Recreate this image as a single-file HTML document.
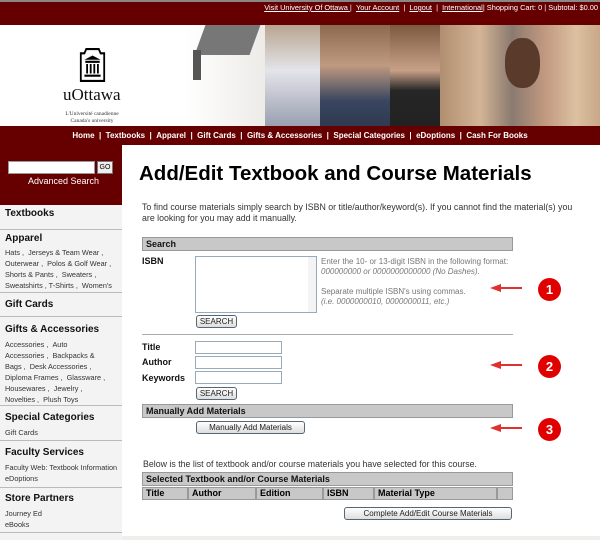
<!DOCTYPE html>
<html><head><meta charset="utf-8"><style>
*{margin:0;padding:0;box-sizing:border-box}
body{width:600px;height:540px;overflow:hidden;background:#fff;font-family:"Liberation Sans",Arial,sans-serif;position:relative}
.a{position:absolute}
.top{left:0;top:0;width:600px;height:26px;background:#660000;border-top:2px solid #888}
.toplinks{right:2px;top:3px;color:#fff;font-size:7.4px;white-space:nowrap}
.toplinks u{color:#fff}
.nav{left:0;top:126px;width:600px;height:19px;background:#660000;color:#fff;font-size:8px;font-weight:bold;text-align:center;line-height:19px;white-space:nowrap}
.side{left:0;top:145px;width:122px;height:395px;background:#f3f3f3}
.sbox{left:0;top:145px;width:122px;height:60px;background:#660000}
.sh{font-size:10px;font-weight:bold;color:#111;left:5px}
.si{font-size:7.3px;color:#333;left:5px;line-height:11px;width:118px}
.sl{left:0;width:122px;height:1px;background:#bbb}
.bar{background:#c8c8c8;border:1px solid #999;font-size:9px;font-weight:bold;color:#111;padding-left:3px;line-height:12px}
.lbl{font-size:9px;font-weight:bold;color:#111}
.inp{border:1px solid #9ab;background:#fff}
.btn{border:1px solid #567;border-radius:3px;background:linear-gradient(#fff,#ddd);font-size:8px;text-align:center;color:#222;line-height:11px}
.hint{font-size:8px;color:#777;line-height:10px}
.circ{width:23px;height:23px;border-radius:50%;background:#e00000;color:#fff;font-weight:bold;font-size:13px;text-align:center;line-height:23px}
.th{background:#c8c8c8;border:1px solid #999;font-size:9px;font-weight:bold;padding-left:3px;line-height:11px;height:13px;top:487px}
</style></head><body>
<div class="a top"></div>
<div class="a toplinks"><u>Visit University Of Ottawa </u> | &nbsp;<u>Your Account</u> &nbsp;| &nbsp;<u>Logout</u> &nbsp;| &nbsp;<u>International</u>| Shopping Cart: 0 | Subtotal: $0.00</div>
<div class="a" style="left:0;top:25px;width:600px;height:101px;background:#fff"></div>
<div class="a" style="left:185px;top:25px;width:85px;height:101px;background:linear-gradient(90deg,#fff,#eceae6)"></div>
<div class="a" style="left:200px;top:25px;width:55px;height:30px;background:#777;transform:skewX(-20deg)"></div>
<div class="a" style="left:193px;top:50px;width:8px;height:30px;background:#555"></div>
<div class="a" style="left:265px;top:25px;width:55px;height:101px;background:linear-gradient(#b8a590,#e4e4ea 45%,#9aa0b0)"></div>
<div class="a" style="left:320px;top:25px;width:70px;height:101px;background:linear-gradient(#8a6a50,#c09a80 40%,#3a4660 75%,#2f3a50)"></div>
<div class="a" style="left:390px;top:25px;width:50px;height:101px;background:linear-gradient(#7a5a40,#c8a088 45%,#262626 65%,#222)"></div>
<div class="a" style="left:440px;top:25px;width:160px;height:101px;background:linear-gradient(90deg,#b08f70,#d4b496 25%,#8a7a70 45%,#c09880 65%,#dcc0a0 85%,#c8a888)"></div>
<div class="a" style="left:505px;top:38px;width:35px;height:50px;border-radius:45%;background:#5a3a2a"></div>
<svg class="a" style="left:79px;top:47px" width="27" height="35" viewBox="0 0 30 33" preserveAspectRatio="none"><path d="M2 32V6h4l2-4h14l2 4h4v26z" fill="#fff" stroke="#000" stroke-width="2"/><path d="M6 12h18l-9-4z M7 13h16v2H7z M8 16h2v9H8zM12 16h2v9h-2zM16 16h2v9h-2zM20 16h2v9h-2z M6 26h18v2H6z" fill="#000"/></svg>
<div class="a" style="left:63px;top:85px;font-family:'Liberation Serif',serif;font-size:17px;color:#111">uOttawa</div>
<div class="a" style="left:57px;top:111px;font-family:'Liberation Serif',serif;font-size:5.5px;color:#333;text-align:center;width:70px;line-height:7px">L'Université canadienne<br>Canada's university</div>
<div class="a nav">Home &nbsp;| &nbsp;Textbooks &nbsp;| &nbsp;Apparel &nbsp;| &nbsp;Gift Cards &nbsp;| &nbsp;Gifts &amp; Accessories &nbsp;| &nbsp;Special Categories &nbsp;| &nbsp;eDoptions &nbsp;| &nbsp;Cash For Books</div>
<div class="a side"></div>
<div class="a sbox"></div>
<div class="a" style="left:8px;top:161px;width:87px;height:13px;background:#fff;border:1px solid #999"></div>
<div class="a" style="left:97px;top:161px;width:16px;height:13px;background:#eee;border:1px solid #777;font-size:7px;text-align:center;line-height:11px">GO</div>
<div class="a" style="left:28px;top:176px;font-size:9px;color:#fff">Advanced Search</div>
<div class="a sh" style="top:208px">Textbooks</div>
<div class="a sl" style="top:229px"></div>
<div class="a sh" style="top:233px">Apparel</div>
<div class="a si" style="top:247px">Hats , &nbsp;Jerseys &amp; Team Wear ,<br>Outerwear , &nbsp;Polos &amp; Golf Wear ,<br>Shorts &amp; Pants , &nbsp;Sweaters ,<br>Sweatshirts , T-Shirts , &nbsp;Women's</div>
<div class="a sl" style="top:292px"></div>
<div class="a sh" style="top:299px">Gift Cards</div>
<div class="a sl" style="top:316px"></div>
<div class="a sh" style="top:324px">Gifts &amp; Accessories</div>
<div class="a si" style="top:339px">Accessories , &nbsp;Auto<br>Accessories , &nbsp;Backpacks &amp;<br>Bags , &nbsp;Desk Accessories ,<br>Diploma Frames , &nbsp;Glassware ,<br>Housewares , &nbsp;Jewelry ,<br>Novelties , &nbsp;Plush Toys</div>
<div class="a sl" style="top:405px"></div>
<div class="a sh" style="top:412px">Special Categories</div>
<div class="a si" style="top:427px">Gift Cards</div>
<div class="a sl" style="top:440px"></div>
<div class="a sh" style="top:447px">Faculty Services</div>
<div class="a si" style="top:462px">Faculty Web: Textbook Information<br>eDoptions</div>
<div class="a sl" style="top:487px"></div>
<div class="a sh" style="top:493px">Store Partners</div>
<div class="a si" style="top:508px">Journey Ed<br>eBooks</div>
<div class="a sl" style="top:532px"></div>
<div class="a" style="left:139px;top:162px;font-size:20.5px;font-weight:bold;color:#000;white-space:nowrap">Add/Edit Textbook and Course Materials</div>
<div class="a" style="left:142px;top:202px;font-size:8.8px;color:#333;line-height:11px;width:440px">To find course materials simply search by ISBN or title/author/keyword(s). If you cannot find the material(s) you are looking for you may add it manually.</div>
<div class="a bar" style="left:142px;top:237px;width:371px;height:14px">Search</div>
<div class="a lbl" style="left:142px;top:256px">ISBN</div>
<div class="a inp" style="left:195px;top:256px;width:122px;height:57px"></div>
<div class="a" style="left:308px;top:257px;width:8px;height:55px;background:#f4f4f4"></div>
<div class="a hint" style="left:321px;top:257px">Enter the 10- or 13-digit ISBN in the following format:<br><i>000000000 or 0000000000000 (No Dashes).</i><br><br>Separate multiple ISBN's using commas.<br><i>(i.e. 0000000010, 0000000011, etc.)</i></div>
<div class="a btn" style="left:196px;top:315px;width:41px;height:13px">SEARCH</div>
<div class="a" style="left:142px;top:334px;width:371px;height:1px;background:#aaa"></div>
<div class="a lbl" style="left:142px;top:342px">Title</div>
<div class="a lbl" style="left:142px;top:357px">Author</div>
<div class="a lbl" style="left:142px;top:373px">Keywords</div>
<div class="a inp" style="left:195px;top:341px;width:87px;height:13px"></div>
<div class="a inp" style="left:195px;top:356px;width:87px;height:13px"></div>
<div class="a inp" style="left:195px;top:371px;width:87px;height:13px"></div>
<div class="a btn" style="left:196px;top:387px;width:41px;height:13px">SEARCH</div>
<div class="a bar" style="left:142px;top:404px;width:371px;height:14px">Manually Add Materials</div>
<div class="a btn" style="left:196px;top:421px;width:109px;height:13px">Manually Add Materials</div>
<div class="a" style="left:143px;top:459px;font-size:8.8px;color:#333">Below is the list of textbook and/or course materials you have selected for this course.</div>
<div class="a bar" style="left:142px;top:472px;width:371px;height:14px">Selected Textbook and/or Course Materials</div>
<div class="a th" style="left:142px;width:46px">Title</div>
<div class="a th" style="left:188px;width:68px">Author</div>
<div class="a th" style="left:256px;width:67px">Edition</div>
<div class="a th" style="left:323px;width:51px">ISBN</div>
<div class="a th" style="left:374px;width:123px">Material Type</div>
<div class="a th" style="left:497px;width:16px"></div>
<div class="a btn" style="left:344px;top:507px;width:168px;height:13px">Complete Add/Edit Course Materials</div>
<div class="a" style="left:122px;top:536px;width:478px;height:4px;background:#eeeeea"></div>
<svg class="a" style="left:488px;top:280px" width="40" height="160" viewBox="0 0 40 160">
<g fill="#e03030"><path d="M2 8l11-4v3h21v2H13v3z"/><path d="M2 85l11-4v3h21v2H13v3z"/><path d="M2 148l11-4v3h21v2H13v3z"/></g></svg>
<div class="a circ" style="left:538px;top:278px">1</div>
<div class="a circ" style="left:538px;top:355px">2</div>
<div class="a circ" style="left:538px;top:418px">3</div>
</body></html>
